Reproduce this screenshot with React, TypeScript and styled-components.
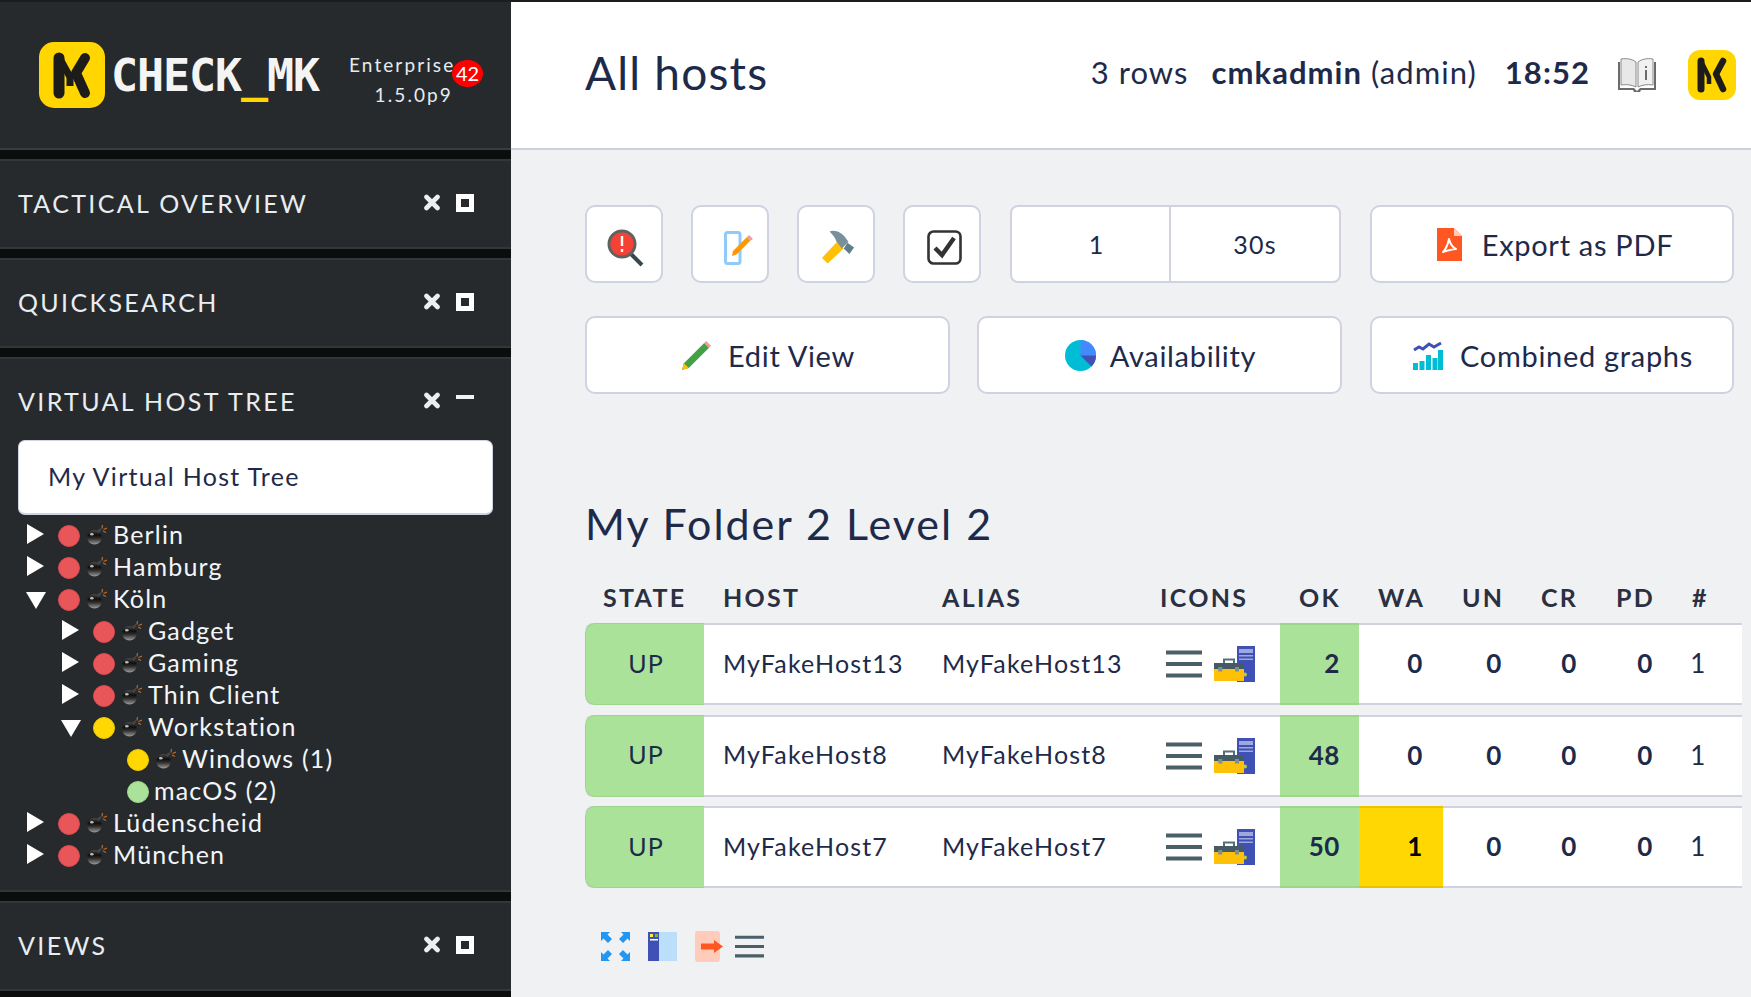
import React from 'react'
import styled, { createGlobalStyle } from 'styled-components'

const GlobalStyle = createGlobalStyle`
	html, body {
		margin: 0;
		padding: 0;
		height: 100%;
		overflow: hidden;
		background: #f0f1f3;
	}
	body {
		font-family: Lato, 'Liberation Sans', sans-serif;
		color: #1e2a4a;
	}
`

const Page = styled.div`
	display: flex;
	width: 1751px;
	height: 997px;
	border-top: 2px solid #1a1c1e;
	box-sizing: border-box;
	overflow: hidden;
`

const Sidebar = styled.aside`
	flex: 0 0 511px;
	display: flex;
	flex-direction: column;
	background: #0c0e0e;
	color: #fff;
`

const Brand = styled.div`
	flex: none;
	height: 146px;
	display: flex;
	align-items: center;
	padding-left: 39px;
	background: #272a2c;
	border-bottom: 2px solid #3a3d40;
`

const BrandName = styled.span`
	margin-left: 6px;
	width: 224px;
	font: bold 45px 'DejaVu Sans Mono', monospace;
	letter-spacing: -1.1px;
	color: #f4f4f4;
`

const Underscore = styled.span`
	color: #ffd600;
`

const Edition = styled.div`
	position: relative;
	margin: 10px 0 0 14px;
	width: 104px;
	text-align: right;
	font-size: 19px;
	line-height: 30px;
	letter-spacing: 2.1px;
	color: #e6ebf0;
`

const Badge = styled.span`
	position: absolute;
	right: -30px;
	top: 10px;
	width: 31px;
	height: 27px;
	border-radius: 50%;
	background: #f00;
	color: #fff;
	font-size: 20px;
	line-height: 27px;
	letter-spacing: 0;
	text-align: center;
`

const Panel = styled.section<{ $height?: number }>`
	margin-top: 9px;
	background: #272a2c;
	border-top: 2px solid #33363a;
	border-bottom: 2px solid #33363a;
	height: ${(p) => p.$height ?? 86}px;
	flex-shrink: 0;
`

const PanelHead = styled.div`
	height: 86px;
	display: flex;
	align-items: center;
	box-sizing: border-box;
	padding: 0 37px 3px 18px;
`

const PanelTitle = styled.h2`
	flex: 1;
	margin: 0;
	font-size: 25px;
	font-weight: 400;
	letter-spacing: 2.35px;
	color: #e8edf2;
`

const Controls = styled.div`
	display: flex;
	align-items: center;
	gap: 15px;
`

const Maximize = styled.span`
	width: 18px;
	height: 18px;
	box-sizing: border-box;
	border: 5px solid #fff;
`

const Minimize = styled.span`
	width: 18px;
	height: 4px;
	margin-bottom: 7px;
	background: #f2f2f2;
`

const SelectBox = styled.div`
	margin: -5px 18px 0;
	height: 72px;
	display: flex;
	align-items: center;
	box-sizing: content-box;
	padding: 0 0 0 29px;
	background: #fff;
	border: 1px solid #d2d3e2;
	border-bottom-width: 2px;
	border-radius: 7px;
	font-size: 25px;
	letter-spacing: 1.3px;
	color: #1e2a4a;
`

const SelectLabel = styled.span`
	margin-bottom: 3px;
`

const Tree = styled.ul`
	list-style: none;
	margin: 3px 0 0;
	padding: 0;
`

const TreeRow = styled.li<{ $level: number }>`
	height: 32px;
	display: flex;
	align-items: center;
	padding-left: ${(p) => 27 + p.$level * 35}px;
	font-size: 25px;
	letter-spacing: 1.18px;
	color: #f2f6fa;
`

const Toggle = styled.span<{ $open?: boolean }>`
	flex: 0 0 18px;
	width: 0;
	height: 0;
	box-sizing: border-box;
	${(p) =>
		p.$open
			? `border-left: 10px solid transparent; border-right: 10px solid transparent; border-top: 17px solid #fff; margin: 4px 12px 0 -1px; flex-basis: 20px;`
			: `border-top: 10px solid transparent; border-bottom: 10px solid transparent; border-left: 17px solid #fff; margin-right: 13px;`}
`

const Dot = styled.span<{ $color: string; $edge: string; $after: number }>`
	flex: 0 0 22px;
	height: 22px;
	border-radius: 50%;
	background: ${(p) => p.$color};
	border: 1px solid ${(p) => p.$edge};
	box-sizing: border-box;
	margin: 3px ${(p) => p.$after}px 0 0;
`

const ToggleSpacer = styled.span`
	flex: 0 0 30px;
`

const BombIcon = styled.svg`
	flex-shrink: 0;
	margin: 2px 6px 0 0;
`

const Main = styled.main`
	flex: 1;
	min-width: 0;
	display: flex;
	flex-direction: column;
`

const TopBar = styled.header`
	flex: 0 0 148px;
	display: flex;
	align-items: center;
	padding: 0 15px 0 74px;
	background: #fff;
	border-bottom: 2px solid #ced0de;
	box-sizing: border-box;
`

const PageTitle = styled.h1`
	flex: 1;
	margin: 0 0 6px;
	font-size: 46px;
	font-weight: 400;
	letter-spacing: 1.2px;
	color: #1e2a4a;
`

const TopText = styled.span<{ $gap: number }>`
	margin: 0 ${(p) => p.$gap}px 6px 0;
	font-size: 31px;
	letter-spacing: 1.05px;
	white-space: nowrap;
`

const Strong = styled.b`
	font-weight: 700;
`

const TopIcon = styled.svg<{ $gap?: number }>`
	margin-right: ${(p) => p.$gap ?? 0}px;
	flex-shrink: 0;
`

const Content = styled.div`
	padding: 55px 9px 0 74px;
`

const ButtonRow = styled.div`
	display: flex;
	margin-bottom: 33px;
`

const Button = styled.div<{ $width: number; $after?: number; $gap?: number; $inset?: number }>`
	flex: 0 0 ${(p) => p.$width}px;
	height: 78px;
	margin-right: ${(p) => p.$after ?? 0}px;
	padding-left: ${(p) => p.$inset ?? 2}px;
	display: flex;
	align-items: center;
	justify-content: center;
	gap: ${(p) => p.$gap ?? 17}px;
	box-sizing: border-box;
	background: #fff;
	border: 2px solid #d0d1e1;
	border-radius: 10px;
	font-size: 29px;
	letter-spacing: 0.7px;
	color: #1e2a4a;
`

const IconBtn = styled(Button)`
	padding-top: 7px;
`

const SplitButton = styled(Button)`
	justify-content: flex-start;
	gap: 0;
	padding-left: 0;
	border-radius: 8px;
	font-size: 25px;
	letter-spacing: 1.2px;
`

const SplitPart = styled.span<{ $width: number; $divider?: boolean }>`
	width: ${(p) => p.$width}px;
	height: 100%;
	display: flex;
	align-items: center;
	justify-content: center;
	box-sizing: border-box;
	padding-left: ${(p) => (p.$divider ? 12 : 0)}px;
	border-right: ${(p) => (p.$divider ? '2px solid #d0d1e1' : 'none')};
`

const SectionTitle = styled.h3`
	margin: 104px 0 0;
	height: 52px;
	font-size: 43px;
	line-height: 52px;
	font-weight: 400;
	letter-spacing: 2px;
	color: #1e2a4a;
`

const COLUMNS = '119px 219px 218px 139px 79px 84px 79px 75px 76px 69px'

const HeadRow = styled.div`
	display: grid;
	grid-template-columns: ${COLUMNS};
	align-items: center;
	height: 46px;
	margin-top: 24px;
	padding-bottom: 3px;
	font-size: 25px;
	font-weight: 700;
	letter-spacing: 2.3px;
	color: #2a3042;
`

const HeadCell = styled.span`
	padding-left: 19px;
	&:first-child {
		padding-left: 18px;
	}
`

const Row = styled.div`
	display: grid;
	grid-template-columns: ${COLUMNS};
	height: 82px;
	margin-bottom: 9.5px;
	box-sizing: border-box;
	background: #fff;
	border-top: 2px solid #d0d1e1;
	border-bottom: 2px solid #d0d1e1;
	border-radius: 8px 0 0 8px;
	font-size: 25px;
	letter-spacing: 1.15px;
	color: #1e2a4a;
`

const Cell = styled.div`
	display: flex;
	align-items: center;
	padding: 0 0 3px 19px;
`

const StateCell = styled(Cell)`
	justify-content: center;
	padding: 0 0 3px 2px;
	margin: -2px 0;
	background: #a9e298;
	border: 1px solid #9bd68a;
	border-right: 0;
	border-radius: 10px 0 0 10px;
	color: #1e2a4a;
`

const IconCell = styled(Cell)`
	padding: 0 0 0 25px;
	gap: 12px;
`

const NumCell = styled.div<{ $tone?: 'ok' | 'warn'; $right: number }>`
	display: flex;
	align-items: center;
	justify-content: flex-end;
	padding: 0 ${(p) => p.$right}px 2px 0;
	font-size: 26px;
	font-weight: 700;
	letter-spacing: 0.6px;
	${(p) =>
		p.$tone === 'ok' &&
		`margin: -2px 0; background: #a9e298; border-top: 2px solid #9bd68a; border-bottom: 2px solid #9bd68a;`}
	${(p) =>
		p.$tone === 'warn' &&
		`margin: -2px 0; background: #ffd703; border-top: 2px solid #e8c400; border-bottom: 2px solid #e8c400; color: #000;`}
`

const PlainNum = styled(NumCell)`
	font-weight: 400;
`

const Footer = styled.div`
	display: flex;
	align-items: center;
	margin: 43px 0 0 16px;
`

const FooterIcon = styled.svg<{ $after: number }>`
	margin-right: ${(p) => p.$after}px;
	flex-shrink: 0;
`

const LogoMark = () => (
	<svg width="66" height="66" viewBox="0 0 66 66" style={{ flexShrink: 0 }}>
		<rect width="66" height="66" rx="15" fill="#ffd600" />
		<path d="M20 16v35" stroke="#1d1c1a" strokeWidth="11" strokeLinecap="round" />
		<path d="M20 15l11 20v9" fill="none" stroke="#1d1c1a" strokeWidth="7" strokeLinejoin="round" />
		<path
			d="M46 16 37 31l9 20"
			fill="none"
			stroke="#1d1c1a"
			strokeWidth="10"
			strokeLinecap="round"
			strokeLinejoin="round"
		/>
	</svg>
)

const TallLogo = () => (
	<svg width="48" height="50" viewBox="0 0 48 50" style={{ flexShrink: 0 }}>
		<rect width="48" height="50" rx="12" fill="#ffd600" />
		<path d="M13 11v28" stroke="#1d1c1a" strokeWidth="7" strokeLinecap="round" />
		<path d="M13 11l8 16v7" fill="none" stroke="#1d1c1a" strokeWidth="4.500" />
		<path
			d="M35 11l-7 13 7 15"
			fill="none"
			stroke="#1d1c1a"
			strokeWidth="6.500"
			strokeLinecap="round"
			strokeLinejoin="round"
		/>
	</svg>
)

const CloseIcon = () => (
	<svg width="18" height="17" viewBox="0 0 18 17">
		<path d="M3.500 3l11 11M14.500 3l-11 11" stroke="#eceff0" strokeWidth="4.600" strokeLinecap="round" />
	</svg>
)

const Bomb = () => (
	<BombIcon width="20" height="20" viewBox="0 0 20 20">
		<defs>
			<linearGradient id="bomb" x1="0" y1="0" x2="0" y2="1">
				<stop offset="0" stopColor="#4a4a4a" />
				<stop offset="0.35" stopColor="#0e0e0e" />
				<stop offset="0.6" stopColor="#333" />
				<stop offset="1" stopColor="#a0a0a0" />
			</linearGradient>
		</defs>
		<circle cx="7.500" cy="12.300" r="7.300" fill="url(#bomb)" />
		<ellipse cx="4.800" cy="9.200" rx="1.800" ry="1.300" fill="#fff" opacity="0.7" />
		<path d="M10.500 7l3.500-3" stroke="#444" strokeWidth="2.400" />
		<path d="M15 3.500 15.500 0M16.500 4.500 20 3M16 6l3 1.500" stroke="#c8661a" strokeWidth="1.200" />
	</BombIcon>
)

const Menu = ({ width = 36, height = 28 }: { width?: number; height?: number }) => (
	<svg width={width} height={height} viewBox="0 0 36 28" style={{ flexShrink: 0 }}>
		<path d="M0 2.500h36M0 14h36M0 25.500h36" stroke="#4b5f69" strokeWidth="4" />
	</svg>
)

const WatoIcon = () => (
	<svg width="41" height="36" viewBox="0 0 41 36" style={{ flexShrink: 0 }}>
		<rect x="23" y="0" width="18" height="36" fill="#3f51b5" />
		<path d="M25 3h14v4H25zM25 9h14v1.500H25zM25 12.500h14V14H25z" fill="#9fa8da" />
		<circle cx="31" cy="28.500" r="2" fill="#c0ca33" />
		<path d="M10 17v-3.500h10V17" fill="none" stroke="#546e7a" strokeWidth="2" />
		<rect x="0" y="17" width="30" height="18" fill="#ffc107" />
		<rect x="0" y="17" width="30" height="6" fill="#455a64" />
		<rect x="4.300" y="21" width="4" height="4.500" fill="#78909c" />
		<rect x="21" y="21" width="4" height="4.500" fill="#78909c" />
	</svg>
)

type TreeItem = {
	name: string
	level: number
	state: 'crit' | 'warn' | 'ok'
	open?: boolean
	leaf?: boolean
	bomb?: boolean
}

const DOTS = {
	crit: ['#e9565a', '#d94a4e'],
	warn: ['#ffd703', '#f0ca00'],
	ok: ['#a9e298', '#9bd68a'],
}

const treeItems: TreeItem[] = [
	{ name: 'Berlin', level: 0, state: 'crit', bomb: true },
	{ name: 'Hamburg', level: 0, state: 'crit', bomb: true },
	{ name: 'Köln', level: 0, state: 'crit', open: true, bomb: true },
	{ name: 'Gadget', level: 1, state: 'crit', bomb: true },
	{ name: 'Gaming', level: 1, state: 'crit', bomb: true },
	{ name: 'Thin Client', level: 1, state: 'crit', bomb: true },
	{ name: 'Workstation', level: 1, state: 'warn', open: true, bomb: true },
	{ name: 'Windows (1)', level: 2, state: 'warn', leaf: true, bomb: true },
	{ name: 'macOS (2)', level: 2, state: 'ok', leaf: true },
	{ name: 'Lüdenscheid', level: 0, state: 'crit', bomb: true },
	{ name: 'München', level: 0, state: 'crit', bomb: true },
]

const hosts = [
	{ name: 'MyFakeHost13', ok: 2, wa: 0 },
	{ name: 'MyFakeHost8', ok: 48, wa: 0 },
	{ name: 'MyFakeHost7', ok: 50, wa: 1 },
]

const headers = ['STATE', 'HOST', 'ALIAS', 'ICONS', 'OK', 'WA', 'UN', 'CR', 'PD', '#']

const PanelHeader = ({ title, open }: { title: string; open?: boolean }) => (
	<PanelHead>
		<PanelTitle>{title}</PanelTitle>
		<Controls>
			<CloseIcon />
			{open ? <Minimize /> : <Maximize />}
		</Controls>
	</PanelHead>
)

export default function App() {
	return (
		<Page>
			<GlobalStyle />
			<Sidebar>
				<Brand>
					<LogoMark />
					<BrandName>
						CHECK<Underscore>_</Underscore>MK
					</BrandName>
					<Edition>
						Enterprise
						<br />
						1.5.0p9
						<Badge>42</Badge>
					</Edition>
				</Brand>
				<Panel>
					<PanelHeader title="TACTICAL OVERVIEW" />
				</Panel>
				<Panel>
					<PanelHeader title="QUICKSEARCH" />
				</Panel>
				<Panel $height={531}>
					<PanelHeader title="VIRTUAL HOST TREE" open />
					<SelectBox>
						<SelectLabel>My Virtual Host Tree</SelectLabel>
					</SelectBox>
					<Tree>
						{treeItems.map((item) => (
							<TreeRow key={item.name} $level={item.level}>
								{item.leaf ? <ToggleSpacer /> : <Toggle $open={item.open} />}
								<Dot $color={DOTS[item.state][0]} $edge={DOTS[item.state][1]} $after={item.bomb ? 7 : 5} />
								{item.bomb && <Bomb />}
								{item.name}
							</TreeRow>
						))}
					</Tree>
				</Panel>
				<Panel>
					<PanelHeader title="VIEWS" />
				</Panel>
			</Sidebar>
			<Main>
				<TopBar>
					<PageTitle>All hosts</PageTitle>
					<TopText $gap={23}>3 rows</TopText>
					<TopText $gap={28}>
						<Strong>cmkadmin</Strong> (admin)
					</TopText>
					<TopText $gap={28}>
						<Strong>18:52</Strong>
					</TopText>
					<TopIcon $gap={32} width="38" height="34" viewBox="0 0 38 34">
						<path d="M0 4h2v26h14l3 3 3-3h14V4h2v28H23l-1 2h-6l-1-2H0z" fill="#6b6b6b" />
						<path d="M3 1c6-1 11 0 15 3v25c-4-2-9-3-15-2z" fill="#e8e8e8" stroke="#8a8a8a" />
						<path d="M35 1c-6-1-11 0-15 3v25c4-2 9-3 15-2z" fill="#f1f1f1" stroke="#8a8a8a" />
						<path d="M27 8h2v2h-2zM27 12h2v10h-2z" fill="#6b6b6b" />
					</TopIcon>
					<TallLogo />
				</TopBar>
				<Content>
					<ButtonRow>
						<IconBtn $width={78} $after={28} $inset={4}>
							<svg width="38" height="38" viewBox="0 0 38 38">
								<path d="M23 24l12 12" stroke="#37474f" strokeWidth="4" />
								<circle cx="15" cy="15" r="13" fill="#f44336" stroke="#616161" strokeWidth="3" />
								<path d="M15 7v10M15 20v3" stroke="#fff" strokeWidth="2.400" />
							</svg>
						</IconBtn>
						<IconBtn $width={78} $after={28} $inset={17}>
							<svg width="30" height="34" viewBox="0 0 30 34">
								<rect x="1.500" y="1.500" width="14.500" height="31" rx="2" fill="none" stroke="#90caf9" strokeWidth="3" />
								<path d="M9 20 23 6l3.500 3.500-14 14-4.500 1.500z" fill="#ff9800" />
								<path d="M23 6l2-2 4 4-2.500 1.500z" fill="#ef9a9a" />
							</svg>
						</IconBtn>
						<IconBtn $width={78} $after={28} $inset={5}>
							<svg width="34" height="35" viewBox="0 0 36 36">
								<path d="M0 29 16 12l7 7L6 35z" fill="#ffc107" />
								<path d="M8 1c6-2 13 1 17 7l3 4-7 7-6-8c-1-3-3-6-7-10z" fill="#78909c" />
								<path d="M27 13l7 5-5 7-6-6z" fill="#607d8b" />
							</svg>
						</IconBtn>
						<IconBtn $width={78} $after={29} $inset={5}>
							<svg width="35" height="35" viewBox="0 0 35 35">
								<rect x="1.500" y="1.500" width="32" height="32" rx="5" fill="none" stroke="#333" strokeWidth="2.600" />
								<path d="M8 18l7 7L27 8" fill="none" stroke="#333" strokeWidth="4.400" />
							</svg>
						</IconBtn>
						<SplitButton $width={331} $after={29}>
							<SplitPart $width={159} $divider>
								1
							</SplitPart>
							<SplitPart $width={168}>30s</SplitPart>
						</SplitButton>
						<Button $width={364} $gap={20} $inset={6}>
							<svg width="25" height="33" viewBox="0 0 25 33">
								<path d="M0 0h17l8 8v25H0z" fill="#ff5722" />
								<path d="M17 0l8 8h-8z" fill="#ffccbc" />
								<path
									d="M12 11c-1 5-2 9-6 13 3-1 8-3 13-3-4-2-6-6-7-10z"
									fill="none"
									stroke="#fff"
									strokeWidth="2"
									strokeLinejoin="round"
								/>
							</svg>
							Export as PDF
						</Button>
					</ButtonRow>
					<ButtonRow>
						<Button $width={365} $after={27}>
							<svg width="29" height="29" viewBox="0 0 30 30">
								<path d="M0 30l2-7L23 2l5 5L7 28z" fill="#43a047" />
								<path d="M23 2l2-2 5 5-2 2z" fill="#ef9a9a" />
								<path d="M0 30l2-7 5 5z" fill="#ffc107" />
							</svg>
							Edit View
						</Button>
						<Button $width={365} $after={28} $gap={14}>
							<svg width="31" height="31" viewBox="0 0 31 31">
								<circle cx="15.500" cy="15.500" r="15.500" fill="#00bcd4" />
								<path d="M15.500 0A15.500 15.500 0 0 1 31 15.500H15.500z" fill="#448aff" />
								<path d="M15.500 15.500H31a15.500 15.500 0 0 1-4.500 11z" fill="#3f51b5" />
							</svg>
							Availability
						</Button>
						<Button $width={364}>
							<svg width="30" height="29" viewBox="0 0 30 29">
								<path d="M1 9l5-3 4 2 6-5 5 3 7-4" fill="none" stroke="#3f51b5" strokeWidth="3" />
								<path d="M0 22h5v7H0zM6.500 20h5v9h-5zM13 14h5v15h-5zM19.500 17h5v12h-5zM25 9h5v20h-5z" fill="#00bcd4" />
							</svg>
							Combined graphs
						</Button>
					</ButtonRow>
					<SectionTitle>My Folder 2 Level 2</SectionTitle>
					<HeadRow>
						{headers.map((h) => (
							<HeadCell key={h}>{h}</HeadCell>
						))}
					</HeadRow>
					{hosts.map((host) => (
						<Row key={host.name}>
							<StateCell>UP</StateCell>
							<Cell>{host.name}</Cell>
							<Cell>{host.name}</Cell>
							<IconCell>
								<Menu />
								<WatoIcon />
							</IconCell>
							<NumCell $tone="ok" $right={19}>
								{host.ok}
							</NumCell>
							<NumCell $tone={host.wa ? 'warn' : undefined} $right={20}>
								{host.wa}
							</NumCell>
							<NumCell $right={20}>0</NumCell>
							<NumCell $right={20}>0</NumCell>
							<NumCell $right={20}>0</NumCell>
							<PlainNum $right={36}>1</PlainNum>
						</Row>
					))}
					<Footer>
						<FooterIcon $after={18} width="29" height="29" viewBox="0 0 29 29">
							<path
								d="M0 0h9L6.500 2.500 11 7 7 11 2.500 6.500 0 9zM29 0v9l-2.500-2.500L22 11l-4-4 4.500-4.500L20 0zM0 29v-9l2.500 2.500L7 18l4 4-4.500 4.500L9 29zM29 29h-9l2.500-2.500L18 22l4-4 4.500 4.500L29 20z"
								fill="#2196f3"
							/>
						</FooterIcon>
						<FooterIcon $after={18} width="29" height="29" viewBox="0 0 29 29">
							<rect width="29" height="29" fill="#bbdefb" />
							<rect width="11" height="29" fill="#3f51b5" />
							<rect x="2" y="2" width="3" height="3" fill="#ffeb3b" />
							<rect x="7" y="2" width="3" height="3" fill="#7cb342" />
							<rect x="2" y="7" width="8" height="1.500" fill="#fff" />
						</FooterIcon>
						<FooterIcon $after={12} width="28" height="31" viewBox="0 0 28 31">
							<rect width="25" height="31" rx="3" fill="#ffccbc" />
							<path d="M6 12.500h13V9l9 6.500-9 6.500v-3.500H6z" fill="#ff5722" />
						</FooterIcon>
						<Menu width={29} height={23} />
					</Footer>
				</Content>
			</Main>
		</Page>
	)
}
